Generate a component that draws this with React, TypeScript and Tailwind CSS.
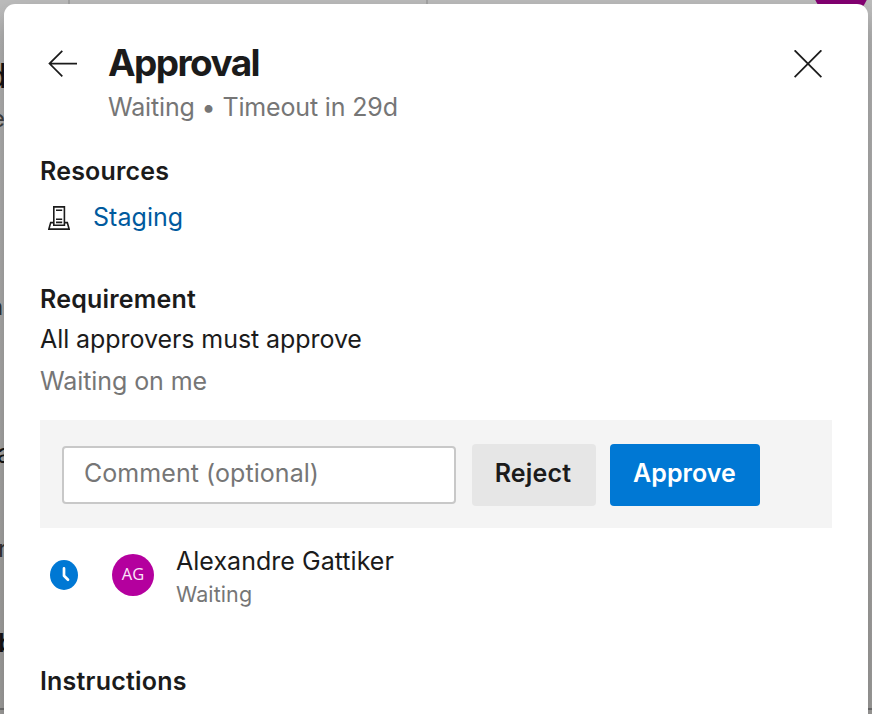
import type { ReactNode } from "react";

function BackIcon() {
  return (
    <svg width="30" height="28" viewBox="0 0 30 28" fill="none" stroke="#1b1b1b" strokeWidth="1.7">
      <path d="M1.5 13.6H29M14.3 .8 1.5 13.6l12.8 12.8" />
    </svg>
  );
}

function CloseIcon() {
  return (
    <svg width="28" height="28" viewBox="0 0 28 28" fill="none" stroke="#1b1b1b" strokeWidth="1.8">
      <path d="M.6.3 27.4 27.1M27.4.3.6 27.1" />
    </svg>
  );
}

function ServerIcon() {
  return (
    <svg width="22" height="24" viewBox="0 0 22 24" fill="none" stroke="#1b1b1b" strokeWidth="1.6">
      <path d="M5.8 19V.9h10.6V19M5 19.2h12.2M8 4.3h6.2M8 13.3h6.2M8 16.4h6.2M5.7 16.6H2.7L.9 23.1h20.2l-1.8-6.5h-3" />
    </svg>
  );
}

function ClockIcon() {
  return (
    <svg width="28" height="30" viewBox="0 0 28 30" fill="none">
      <ellipse cx="14" cy="15" rx="14" ry="15" fill="#0078d4" />
      <path d="M14 8.4v7.4l4 4" stroke="#fff" strokeWidth="2.7" strokeLinecap="round" strokeLinejoin="round" />
    </svg>
  );
}

function Heading({ children }: { children: ReactNode }) {
  return <h2 className="text-[25px] leading-8 font-semibold tracking-[0.2px]">{children}</h2>;
}

function PageBehind() {
  return (
    <div className="absolute inset-0 flex flex-col overflow-hidden bg-linear-to-b from-[#bdbdbd] to-[#a8a7a5] text-[#151515]">
      <div className="flex h-14 shrink-0">
        <div className="w-[70px] border-r-2 border-[#a5a5a5]" />
        <div className="w-[358px] border-r-2 border-[#a5a5a5]" />
        <div className="-mt-[39px] ml-[385px] h-14 w-14 shrink-0 rounded-full bg-[#850073]" />
      </div>
      <div className="flex h-[652px] flex-col items-start">
        <span className="-ml-[14px] text-[34px] leading-10">d</span>
        <span className="mt-[7px] -ml-[9px] text-[24px] leading-8 text-[#444]">e</span>
        <span className="mt-[156px] -ml-[11px] text-[24px] leading-8 text-[#333]">nc</span>
        <span className="mt-[115px] -ml-[3px] text-[26px] leading-8">a</span>
        <span className="mt-[63px] -ml-[2px] text-[24px] leading-8 text-[#333]">r</span>
        <span className="mt-[62px] -ml-[2px] text-[26px] leading-8 font-semibold">b</span>
      </div>
      <div className="h-[2px] bg-[#777]" />
    </div>
  );
}

export default function App() {
  return (
    <div className="relative h-[714px] w-[872px] overflow-hidden font-['Inter','Liberation_Sans',sans-serif] text-[#1b1b1b]">
      <PageBehind />
      <main className="relative mt-1 ml-1 flex h-[760px] w-[864px] flex-col rounded-[11px] bg-white px-9 pt-[35px] shadow-[0_14px_28px_rgba(0,0,0,0.32)]">
        <header className="flex items-start">
          <div className="w-[68px] pt-[11px] pl-2"><BackIcon /></div>
          <div className="flex flex-1 flex-col gap-1">
            <h1 className="text-[37px] leading-[48px] font-bold tracking-[-1.6px]">Approval</h1>
            <p className="text-[25px] leading-8 tracking-[-0.15px] text-[#767676]">Waiting • Timeout in 29d</p>
          </div>
          <button className="pt-[11px] pr-[10px]"><CloseIcon /></button>
        </header>

        <section className="flex flex-col gap-[14px] pt-8">
          <Heading>Resources</Heading>
          <div className="flex h-8 items-center gap-[23px] pl-2">
            <div className="pt-[2px]"><ServerIcon /></div>
            <a className="text-[25px] leading-8 tracking-[0.05px] text-[#005a9e]">Staging</a>
          </div>
        </section>

        <section className="flex flex-col pt-[50px]">
          <Heading>Requirement</Heading>
          <p className="pt-2 text-[25px] leading-8 tracking-[-0.07px]">All approvers must approve</p>
          <p className="pt-[10px] text-[25px] leading-8 tracking-[-0.08px] text-[#767676]">Waiting on me</p>

          <div className="mt-[23px] flex h-[108px] items-start bg-[#f4f4f4] pt-6 pl-[22px]">
            <div className="mt-[2px] h-[58px] w-[394px] rounded-[4px] border-2 border-[#c8c8c8] bg-white px-5 pt-[9px] text-[25px] leading-8 tracking-[0.06px] text-[#767676]">
              Comment (optional)
            </div>
            <div className="flex gap-[14px] pl-4 text-[25px] leading-8 font-semibold">
              <button className="h-[62px] w-[124px] rounded-[4px] bg-[#e6e6e6] pr-[2px] pb-1 tracking-[0.2px]">Reject</button>
              <button className="h-[62px] w-[150px] rounded-[4px] bg-[#0078d4] pr-[1px] pb-1 tracking-[0.05px] text-white">Approve</button>
            </div>
          </div>

          <div className="flex items-center pt-[17px] pl-[10px]">
            <ClockIcon />
            <div className="ml-[34px] flex h-[42px] w-[42px] items-center justify-center rounded-full bg-[#b4009e] font-['Open_Sans'] text-[16.5px] text-[#fbe5f8]">AG</div>
            <div className="flex flex-col gap-[3px] pl-[22px]">
              <p className="text-[25px] leading-8 tracking-[0.03px]">Alexandre Gattiker</p>
              <p className="h-6 text-[21.5px] leading-[29px] tracking-[0.1px] text-[#767676]">Waiting</p>
            </div>
          </div>
        </section>

        <section className="pt-[61px]">
          <Heading>Instructions</Heading>
        </section>
      </main>
    </div>
  );
}
